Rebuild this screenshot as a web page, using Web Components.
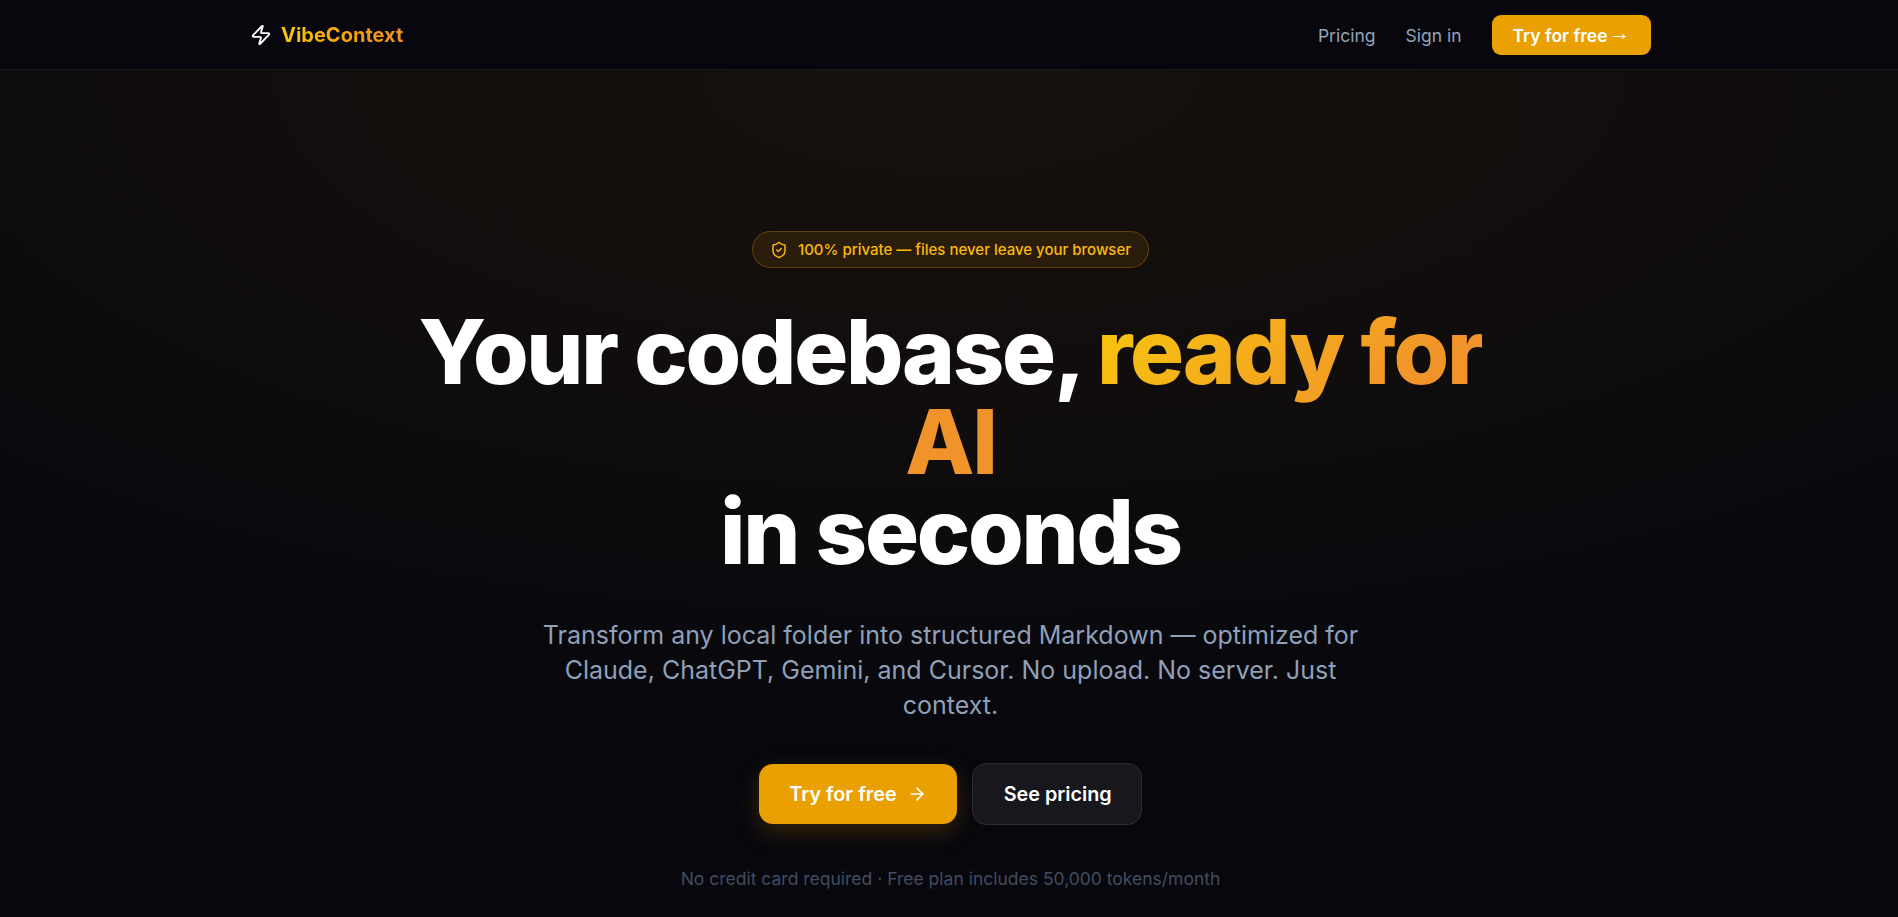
<!DOCTYPE html>
<html lang="en">
<head>
<meta charset="utf-8">
<title>VibeContext</title>
<style>
html, body { margin: 0; height: 100%; }
body {
    background: #07070d;
    color: #fff;
    font-family: Inter, "Liberation Sans", sans-serif;
    overflow: hidden;
}
</style>
</head>
<body>
<vc-page>
    <vc-header></vc-header>
    <vc-hero></vc-hero>
</vc-page>

<script>
const ARROW_ICON = `<svg width="20" height="20" viewBox="0 0 24 24" fill="none" stroke="currentColor" stroke-width="2" stroke-linecap="round" stroke-linejoin="round"><path d="M5 12h14"/><path d="m12 5 7 7-7 7"/></svg>`;
const BOLT_ICON = `<svg width="22" height="22" viewBox="0 0 24 24" fill="none" stroke="currentColor" stroke-width="2" stroke-linecap="round" stroke-linejoin="round"><path d="M4 14a1 1 0 0 1-.78-1.63l9.9-10.2a.5.5 0 0 1 .86.46l-1.92 6.02A1 1 0 0 0 13 10h7a1 1 0 0 1 .78 1.63l-9.9 10.2a.5.5 0 0 1-.86-.46l1.92-6.02A1 1 0 0 0 11 14z"/></svg>`;
const SHIELD_ICON = `<svg width="18" height="18" viewBox="0 0 24 24" fill="none" stroke="currentColor" stroke-width="2" stroke-linecap="round" stroke-linejoin="round"><path d="M20 13c0 5-3.5 7.5-7.66 8.95a1 1 0 0 1-.67-.01C7.5 20.5 4 18 4 13V6a1 1 0 0 1 1-1c2 0 4.5-1.2 6.24-2.72a1.17 1.17 0 0 1 1.52 0C14.51 3.81 17 5 19 5a1 1 0 0 1 1 1z"/><path d="m9 12 2 2 4-4"/></svg>`;

function make_shadow(el, html){
    const shadow = el.attachShadow({mode:"open"});
    shadow.innerHTML = html;
    return shadow;
}

customElements.define("vc-page", class VcPage extends HTMLElement {
    constructor(){
        super();
        make_shadow(this, `
            <style>
            :host {
                display: flex;
                flex-direction: column;
                height: 917px;
                background:
                    radial-gradient(ellipse 85% 72% at 50% 8%, rgba(245,158,11,0.065), rgba(245,158,11,0.038) 50%, rgba(245,158,11,0) 100%),
                    #07070d;
            }
            </style>
            <slot></slot>
        `);
    }
});

customElements.define("vc-header", class VcHeader extends HTMLElement {
    constructor(){
        super();
        make_shadow(this, `
            <style>
            :host {
                display: block;
                height: 69px;
                background: #07070d;
                border-bottom: 1px solid #17171c;
            }
            .bar {
                width: 1401px;
                height: 100%;
                margin-left: 250px;
                display: flex;
                align-items: center;
                justify-content: space-between;
            }
            .logo { display: flex; align-items: center; gap: 9px; }
            .logo svg { display: block; color: #fff; }
            .name {
                font-size: 20px;
                font-weight: 700;
                background: linear-gradient(90deg, #f8c80c, #f59e0b 60%, #f0932b);
                -webkit-background-clip: text;
                background-clip: text;
                color: transparent;
            }
            nav { display: flex; align-items: center; gap: 30px; }
            a { color: #94a3b8; font-size: 17.5px; text-decoration: none; padding-top: 2px; }
            .cta {
                box-sizing: border-box;
                display: flex;
                align-items: center;
                height: 40px;
                padding: 2px 21px 0;
                border-radius: 9px;
                background: #eaa000;
                color: #fff;
                font-weight: 600;
            }
            .arrow {
                font-family: "Liberation Sans", sans-serif;
                font-size: 21.5px;
                line-height: 1;
                font-weight: 700;
                margin: 0 0 3px 1px;
            }
            </style>
            <div class="bar">
                <div class="logo">${BOLT_ICON}<span class="name">VibeContext</span></div>
                <nav>
                    <a href="#">Pricing</a>
                    <a href="#">Sign in</a>
                    <a href="#" class="cta">Try for free <span class="arrow">→</span></a>
                </nav>
            </div>
        `);
    }
});

customElements.define("vc-btn", class VcBtn extends HTMLElement {
    constructor(){
        super();
        make_shadow(this, `
            <style>
            :host {
                display: inline-flex;
                align-items: center;
                justify-content: center;
                gap: 10px;
                box-sizing: border-box;
                height: 62px;
                padding: 0 29px 0 31px;
                border-radius: 14px;
                font-size: 19.8px;
                font-weight: 600;
                color: #fff;
                background: #17171d;
                border: 1px solid #2a2a31;
            }
            :host([primary]) {
                height: 60px;
                padding: 0 30px;
                background: #eaa000;
                border: 0;
                box-shadow: 0 8px 24px rgba(245,158,11,0.2);
            }
            ::slotted(svg) { display: block; }
            </style>
            <slot></slot>
        `);
    }
});

customElements.define("vc-badge", class VcBadge extends HTMLElement {
    constructor(){
        super();
        make_shadow(this, `
            <style>
            :host {
                display: inline-flex;
                align-items: center;
                gap: 10px;
                box-sizing: border-box;
                height: 37px;
                padding: 0 17px;
                border-radius: 19px;
                background: rgba(245,158,11,0.1);
                border: 1px solid rgba(245,158,11,0.28);
                color: #fbb90a;
                font-size: 15px;
                font-weight: 500;
            }
            ::slotted(svg) { display: block; }
            </style>
            <slot></slot>
        `);
    }
});

customElements.define("vc-hero", class VcHero extends HTMLElement {
    constructor(){
        super();
        make_shadow(this, `
            <style>
            :host {
                display: flex;
                flex-direction: column;
                align-items: center;
                text-align: center;
                padding: 161px 0 0 3px;
            }
            h1 {
                width: 1100px;
                margin: 39px 0 0;
                font-size: 90px;
                line-height: 90px;
                font-weight: 800;
                letter-spacing: -0.025em;
                color: #fff;
            }
            .grad {
                background: linear-gradient(135deg, #f8c80c, #f0932b 70%);
                -webkit-background-clip: text;
                background-clip: text;
                color: transparent;
            }
            p {
                width: 840px;
                margin: 41px 0 0;
                font-size: 25px;
                line-height: 35px;
                color: #8fa0b9;
            }
            .actions { display: flex; align-items: center; gap: 15px; margin-top: 40px; }
            .note { margin-top: 43px; font-size: 17.5px; color: #434d60; }
            </style>
            <slot name="badge"></slot>
            <h1>Your codebase, <span class="grad">ready for AI</span><br>in seconds</h1>
            <p>Transform any local folder into structured Markdown — optimized for Claude, ChatGPT, Gemini, and Cursor. No upload. No server. Just context.</p>
            <div class="actions">
                <vc-btn primary>Try for free ${ARROW_ICON}</vc-btn>
                <vc-btn>See pricing</vc-btn>
            </div>
            <div class="note">No credit card required · Free plan includes 50,000 tokens/month</div>
        `);
        const badge = document.createElement("vc-badge");
        badge.slot = "badge";
        badge.innerHTML = SHIELD_ICON + "100% private — files never leave your browser";
        this.appendChild(badge);
    }
});
</script>
</body>
</html>
